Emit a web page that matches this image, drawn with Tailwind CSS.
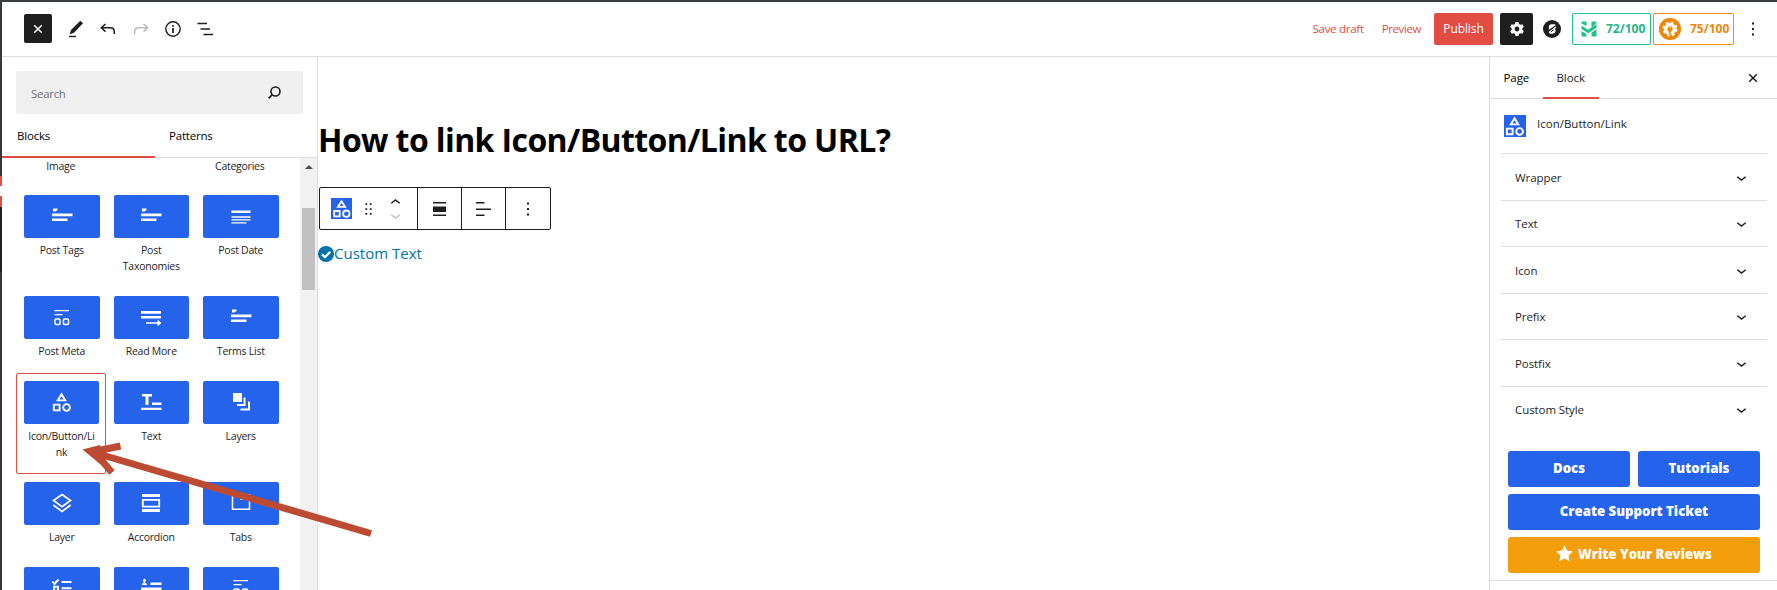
<!DOCTYPE html>
<html lang="en">
<head>
<meta charset="utf-8">
<title>Edit Page</title>
<script src="https://cdn.jsdelivr.net/npm/@tailwindcss/browser@4"></script>
</head>
<body class="h-[590px] w-[1777px] overflow-hidden bg-white font-['Open_Sans',sans-serif] text-[11.5px] text-[#1e1e1e]">
<svg class="hidden">
  <symbol id="shapes" viewBox="0 0 24 24"><g fill="none" stroke="currentColor" stroke-width="2"><path d="M12 3.500 15.900 9.800H8.100Z"/><path d="M4 14.200h6v6H4z"/><circle cx="17.300" cy="17.200" r="3.500"/></g></symbol>
  <symbol id="tags" viewBox="0 0 24 24"><path fill="currentColor" d="M3 3.500h4.500V5L5.500 6.500H3zM2 8.500h20.500v2.700H2zM2 13.500h15.500v2.500H2z"/></symbol>
  <symbol id="meta" viewBox="0 0 24 24"><path fill="currentColor" d="M4.500 4H19v1.300H4.500zM4.500 8h8v1.300h-8z"/><g fill="none" stroke="currentColor" stroke-width="1.500"><rect x="5" y="13" width="5" height="5.500" rx="1"/><rect x="13.500" y="13" width="5" height="5.500" rx="1"/></g></symbol>
  <symbol id="chev" viewBox="0 0 12 8"><path d="M1.200 2 6 5.800 10.800 2" fill="none" stroke="currentColor" stroke-width="1.700"/></symbol>
</svg>
<div class="relative flex h-full flex-col border-t-2 border-[#3a3e43]">
  <div class="flex min-h-0 flex-1">
    <div class="flex w-[2px] shrink-0 flex-col bg-[#33383d]"><div class="mt-[174px] h-[10px] bg-[#e34f47]"></div><div class="h-[10px] bg-white"></div><div class="h-[11px] bg-[#e34f47]"></div><div class="h-[65px] bg-[#1d2125]"></div></div>
    <div class="flex min-w-0 flex-1 flex-col">
      <header class="flex h-[55px] shrink-0 items-center border-b border-[#dedede] pr-[22px] pb-px pl-[22px]">
        <button class="flex h-[29px] w-7 items-center justify-center rounded-[2px] bg-[#1e1e1e] text-white"><svg class="size-[10px]" viewBox="0 0 10 10"><path d="M1.200 1.200l7.600 7.600M8.800 1.200 1.200 8.800" stroke="currentColor" stroke-width="1.500"/></svg></button>
        <svg class="ml-4 h-[18px] w-4" viewBox="0 0 16 18"><path d="M12.300.800 15 3.300 6 12.800 1.700 14.300 3 9.900Z" fill="#1e1e1e"/><path d="M1 16.500h7" stroke="#1e1e1e" stroke-width="1.400"/></svg>
        <svg class="ml-4 h-3 w-4" viewBox="0 0 16 12"><path d="M5.500 1 1.300 4.800 5.500 8.600M1.500 4.800H10q4.300 0 4.300 3.500V11" fill="none" stroke="#1e1e1e" stroke-width="1.500"/></svg>
        <svg class="ml-[17px] h-3 w-4" viewBox="0 0 16 12"><path d="M10.500 1 14.700 4.800 10.500 8.600M14.500 4.800H6Q1.700 4.800 1.700 8.300V11" fill="none" stroke="#bbb" stroke-width="1.500"/></svg>
        <svg class="ml-4 size-4" viewBox="0 0 16 16"><circle cx="8" cy="8" r="7.200" fill="none" stroke="#1e1e1e" stroke-width="1.400"/><path d="M8 7v5M8 4v1.700" stroke="#1e1e1e" stroke-width="1.700"/></svg>
        <svg class="ml-4 h-[14px] w-4" viewBox="0 0 16 14"><path d="M.500 1.500h9.500M3.500 7h9.500M6.500 12.500H16" stroke="#1e1e1e" stroke-width="1.500"/></svg>
        <div class="ml-auto flex items-center">
          <span class="tracking-[-0.28px] text-[#e14d43]">Save draft</span>
          <span class="ml-[18px] tracking-[-0.4px] text-[#e14d43]">Preview</span>
          <button class="ml-[13px] flex h-8 w-[59px] items-center justify-center rounded-[2px] bg-[#e14d43] text-[12px] tracking-[-0.1px] text-white">Publish</button>
          <button class="ml-[7px] flex h-8 w-[33px] items-center justify-center rounded-[2px] bg-[#1e1e1e]"><svg class="size-4" viewBox="0 0 16 16"><path d="M6.500 1h3l.5 2 1.300.8 2-.6 1.500 2.600L13.300 7.200v1.600l1.500 1.400-1.500 2.600-2-.6L10 13l-.5 2h-3L6 13l-1.300-.8-2 .6-1.500-2.600 1.500-1.400V7.200L1.200 5.800l1.500-2.600 2 .6L6 3Z" fill="#fff"/><circle cx="8" cy="8" r="2.400" fill="#1e1e1e"/></svg></button>
          <svg class="ml-[10px] size-[18px]" viewBox="0 0 18 18"><circle cx="9" cy="9" r="9" fill="#1e1e1e"/><path d="M5.800 9.800V7Q6 4.300 8.500 4.300h2.700q1.200 0 1.700.7Z" fill="#fff"/><path d="M5.800 11.700 12.800 6.300q.5 1.500-.9 2.700 1 .8.700 2.300-.5 2.400-3 2.400H7.500q-1.500-.2-1.700-2Z" fill="#fff"/><path d="M8 11.700 10.800 9.700" stroke="#1e1e1e" stroke-width="1"/></svg>
          <div class="ml-[11px] flex h-8 w-[79px] items-center rounded-[2px] border border-[#1fc48a] pl-2 text-[12px] font-bold text-[#1fb785]"><svg class="size-4" viewBox="0 0 16 16"><path d="M.500.500h5v4.500L.500 2.500ZM10.500.500h5v1.500l-5 4.500ZM.500 4.500 7 8.700 15.500 2.900v3.800L7.200 12.300.500 8ZM.500 10l5 3v2.500h-5ZM10.500 11.500l5-3.300v7.300h-5Z" fill="#1fc48a"/></svg><span class="ml-[9px]">72/100</span></div>
          <div class="ml-[2px] flex h-8 w-[81px] items-center rounded-[2px] border border-[#f48e0b] pl-[5px] text-[12px] font-bold text-[#f0860a]"><svg class="size-[22px]" viewBox="0 0 22 22"><circle cx="11" cy="11" r="11" fill="#f18500"/><circle cx="11" cy="11" r="6" fill="#fff"/><circle cx="11" cy="11" r="6.500" fill="none" stroke="#fff" stroke-width="2" stroke-dasharray="2.800 2.300"/><path d="M8.500 9.500v2q0 2 1.700 2.200V17h1.600v-3.300q1.700-.2 1.700-2.200v-2h-1V7.500h-.8v2h-1.400v-2h-.8v2Z" fill="#f18500"/></svg><span class="ml-[9px]">75/100</span></div>
          <svg class="ml-[17px] h-[14px] w-[4px]" viewBox="0 0 4 14"><path d="M1 .500h2v2H1zM1 6h2v2H1zM1 11.500h2v2H1z" fill="#1e1e1e"/></svg>
        </div>
      </header>
      <div class="flex min-h-0 flex-1">
        <aside class="flex w-[316px] shrink-0 flex-col border-r border-[#dedede]">
          <div class="mx-[14px] mt-[14px] flex h-[43px] w-[287px] shrink-0 items-center justify-between rounded-[2px] bg-[#f0f0f0] pt-[2px] pr-[22px] pl-[15px] tracking-[-0.3px] text-[#757575]"><span>Search</span><svg class="mb-[2px] size-[13px] text-[#1e1e1e]" viewBox="0 0 13 13"><circle cx="7.500" cy="5.500" r="4.500" fill="none" stroke="currentColor" stroke-width="1.600"/><path d="M4.300 8.700.700 12.300" stroke="currentColor" stroke-width="1.700"/></svg></div>
          <div class="flex h-[44px] shrink-0 border-b border-[#dedede] tracking-[-0.2px] text-black">
            <div class="flex h-[44px] w-[153px] items-center border-b-2 border-[#e14d43] pt-px pl-[15px]">Blocks</div>
            <div class="flex items-center pl-[14px]">Patterns</div>
          </div>
          <div class="flex min-h-0 flex-1">
            <div class="w-[298px] overflow-hidden">
              <div class="ml-[14px] grid w-[268.5px] grid-cols-3 text-center text-[10.5px] leading-4 tracking-[-0.25px]">
                <div class="h-[29px]">Image</div><div></div><div>Categories</div>
                <div class="h-[101px] pt-2 pr-[6px] pl-2"><div class="mb-1 flex h-[43px] items-center justify-center rounded-[2px] bg-[#2563eb] text-white"><svg class="size-6"><use href="#tags"/></svg></div>Post Tags</div>
                <div class="pt-2 pr-[6px] pl-2"><div class="mb-1 flex h-[43px] items-center justify-center rounded-[2px] bg-[#2563eb] text-white"><svg class="size-6"><use href="#tags"/></svg></div>Post<br>Taxonomies</div>
                <div class="pt-2 pr-[6px] pl-2"><div class="mb-1 flex h-[43px] items-center justify-center rounded-[2px] bg-[#2563eb] text-white"><svg class="size-5" viewBox="0 0 20 20"><path fill="currentColor" d="M.500 3.500h19V6H.500zM.500 9.300h19v1.400H.500zM.500 12.300h19v1.200H.500zM.500 15.200h15v1.200H.500z"/></svg></div>Post Date</div>
                <div class="h-[84.5px] pt-2 pr-[6px] pl-2"><div class="mb-1 flex h-[43px] items-center justify-center rounded-[2px] bg-[#2563eb] text-white"><svg class="size-6"><use href="#meta"/></svg></div>Post Meta</div>
                <div class="pt-2 pr-[6px] pl-2"><div class="mb-1 flex h-[43px] items-center justify-center rounded-[2px] bg-[#2563eb] text-white"><svg class="size-6" viewBox="0 0 24 24"><path fill="currentColor" d="M2 5h20v2.700H2zM2 10h20v2.500H2zM7 16.300h11.500v-2.500L22.500 17l-4 3.200v-2.400H7z"/></svg></div>Read More</div>
                <div class="pt-2 pr-[6px] pl-2"><div class="mb-1 flex h-[43px] items-center justify-center rounded-[2px] bg-[#2563eb] text-white"><svg class="size-6"><use href="#tags"/></svg></div>Terms List</div>
                <div class="h-[101px] w-[90px] rounded-[2px] border-[1.5px] border-[#e14d43] pt-[7px] pr-[6px] pl-[7px]"><div class="mb-1 flex h-[43px] items-center justify-center rounded-[2px] bg-[#2563eb] text-white"><svg class="size-[23px]"><use href="#shapes"/></svg></div>Icon/Button/Li<br>nk</div>
                <div class="pt-2 pr-[6px] pl-2"><div class="mb-1 flex h-[43px] items-center justify-center rounded-[2px] bg-[#2563eb] text-white"><svg class="size-6" viewBox="0 0 24 24"><path fill="currentColor" d="M3 4h10v2.500H9.500V15h-3V6.500H3zM13 12.500h9.500V15H13zM2 17.700h20.500V20H2z"/></svg></div>Text</div>
                <div class="pt-2 pr-[6px] pl-2"><div class="mb-1 flex h-[43px] items-center justify-center rounded-[2px] bg-[#2563eb] text-white"><svg class="size-6" viewBox="0 0 24 24"><path fill="currentColor" d="M4 3h9v9H4zM14.500 7.500h2V16H8v-2h6.500zM19 11.500h2V20.500h-9.500v-2H19z"/></svg></div>Layers</div>
                <div class="h-[85px] pt-2 pr-[6px] pl-2"><div class="mb-1 flex h-[43px] items-center justify-center rounded-[2px] bg-[#2563eb] text-white"><svg class="size-6" viewBox="0 0 24 24"><path fill="none" stroke="currentColor" stroke-width="1.700" d="M12 3.500 20.500 9.500 12 15.800 3.500 9.500ZM3.300 14 12 20.500 20.700 14"/></svg></div>Layer</div>
                <div class="pt-2 pr-[6px] pl-2"><div class="mb-1 flex h-[43px] items-center justify-center rounded-[2px] bg-[#2563eb] text-white"><svg class="size-6" viewBox="0 0 24 24"><path fill="currentColor" d="M3 3h18v3H3zM3 18h18v3H3z"/><path d="M3.800 8.800h16.400v6.900H3.800z" fill="none" stroke="currentColor" stroke-width="1.800"/></svg></div>Accordion</div>
                <div class="pt-2 pr-[6px] pl-2"><div class="mb-1 flex h-[43px] items-center justify-center rounded-[2px] bg-[#2563eb] text-white"><svg class="size-6" viewBox="0 0 24 24"><path fill="none" stroke="currentColor" stroke-width="1.500" d="M3.500 4h17v14.200h-17zM12 4v4h8.500"/></svg></div>Tabs</div>
                <div class="pt-2 pr-[6px] pl-2"><div class="flex h-[43px] items-center justify-center rounded-[2px] bg-[#2563eb] text-white"><svg class="size-6" viewBox="0 0 24 24"><path fill="none" stroke="currentColor" stroke-width="2" d="M2.500 5.500 4.500 8 8.500 3.500M11.500 6H21.500M11.500 12.300H21.500M4 10.700h4v4H4z"/></svg></div></div>
                <div class="pt-2 pr-[6px] pl-2"><div class="flex h-[43px] items-center justify-center rounded-[2px] bg-[#2563eb] text-white"><svg class="size-6" viewBox="0 0 24 24"><path fill="currentColor" d="M3 9q.2-2 2-2.400Q3.500 5 4.300 3.500q1.200-1.400 2.400 0Q7.500 5 6 6.600 7.800 7 8 9zM11.500 6.500h11V9h-11zM2 11.500h20.500V14H2z"/></svg></div></div>
                <div class="pt-2 pr-[6px] pl-2"><div class="flex h-[43px] items-center justify-center rounded-[2px] bg-[#2563eb] text-white"><svg class="size-6"><use href="#meta"/></svg></div></div>
              </div>
            </div>
            <div class="flex w-[17px] flex-col items-center bg-[#f1f1f1] pt-[7px]">
              <svg class="h-[4px] w-[8px]" viewBox="0 0 8 4"><path d="M4 0 8 4H0Z" fill="#505050"/></svg>
              <div class="mt-[39px] h-[82px] w-[13px] bg-[#c1c1c1]"></div>
            </div>
          </div>
        </aside>
        <main class="flex min-w-0 flex-1 flex-col items-start">
          <h1 class="mt-[61px] text-[32px] leading-[44px] font-bold tracking-[-0.6px] whitespace-nowrap text-black">How to link Icon/Button/Link to URL?</h1>
          <div class="mt-[25px] ml-px flex h-[43px] w-[232px] items-center rounded-[2px] border border-[#1e1e1e]">
            <div class="flex h-full w-[98px] items-center border-r border-[#1e1e1e] pl-[11px]">
              <div class="flex size-[21px] items-center justify-center bg-[#2563eb] text-white"><svg class="size-[21px]" viewBox="1 0 22 23"><use href="#shapes" width="24" height="24"/></svg></div>
              <svg class="ml-[13px] h-[14px] w-[7px]" viewBox="0 0 8 14"><path d="M.500.500h2v2h-2zM5.500.500h2v2h-2zM.500 6h2v2h-2zM5.500 6h2v2h-2zM.500 11.500h2v2h-2zM5.500 11.500h2v2h-2z" fill="#1e1e1e"/></svg>
              <div class="ml-[18px] flex flex-col gap-[8px]"><svg class="h-[7px] w-[11px] rotate-180"><use href="#chev"/></svg><svg class="h-[7px] w-[11px] text-[#bbb]"><use href="#chev"/></svg></div>
            </div>
            <div class="flex h-full w-[44px] items-center justify-center border-r border-[#1e1e1e]"><svg class="h-[14px] w-[13px]" viewBox="0 0 13 14"><path d="M0 0h13v1.500H0zM0 4.500h13v5.500H0zM0 12.500h13V14H0z" fill="#1e1e1e"/></svg></div>
            <div class="flex h-full w-[44px] items-center justify-center border-r border-[#1e1e1e]"><svg class="h-[14px] w-[15px]" viewBox="0 0 15 14"><path d="M0 0h8.500v1.400H0zM0 6.500h15v1.400H0zM0 12.500h8.500v1.400H0z" fill="#1e1e1e"/></svg></div>
            <div class="flex h-full flex-1 items-center justify-center"><svg class="h-[14px] w-[4px]" viewBox="0 0 4 14"><path d="M1 .500h2v2H1zM1 6h2v2H1zM1 11.500h2v2H1z" fill="#1e1e1e"/></svg></div>
          </div>
          <div class="mt-[13px] flex items-center text-[15px] leading-[21px] text-[#0073aa]"><svg class="mt-px size-4" viewBox="0 0 16 16"><circle cx="8" cy="8" r="8" fill="currentColor"/><path d="M4 8.300 6.900 11.200 12.300 5.700" fill="none" stroke="#fff" stroke-width="2.300"/></svg>Custom Text</div>
        </main>
        <aside class="flex w-[288px] shrink-0 flex-col border-l border-[#dedede] tracking-[-0.08px]">
          <div class="flex h-[42px] shrink-0 border-b border-[#dedede]">
            <div class="flex items-center pl-[13.5px] text-black">Page</div>
            <div class="ml-[13.5px] flex h-[42px] w-[56px] items-center justify-center border-b-2 border-[#e14d43] pt-px">Block</div>
            <svg class="mt-4 mr-[19px] ml-auto size-[10px]" viewBox="0 0 10 10"><path d="M1.200 1.200l7.600 7.600M8.800 1.200 1.200 8.800" stroke="#1e1e1e" stroke-width="1.500"/></svg>
          </div>
          <div class="flex h-[54px] shrink-0 pt-4 pl-[14px]">
            <div class="size-[22px] bg-[#2563eb] text-white"><svg class="size-[22px]" viewBox="1 0 23 23"><use href="#shapes" width="24" height="24"/></svg></div>
            <span class="ml-[11px] leading-[18px] tracking-normal">Icon/Button/Link</span>
          </div>
          <div class="mr-[10px] ml-[11px] flex flex-col *:flex *:h-[46.5px] *:items-center *:justify-between *:border-t *:border-[#dedede] *:pt-px *:pr-5 *:pl-[14px]">
            <div>Wrapper<svg class="mt-[2px] h-[7px] w-[11px]"><use href="#chev"/></svg></div>
            <div>Text<svg class="mt-[2px] h-[7px] w-[11px]"><use href="#chev"/></svg></div>
            <div>Icon<svg class="mt-[2px] h-[7px] w-[11px]"><use href="#chev"/></svg></div>
            <div>Prefix<svg class="mt-[2px] h-[7px] w-[11px]"><use href="#chev"/></svg></div>
            <div>Postfix<svg class="mt-[2px] h-[7px] w-[11px]"><use href="#chev"/></svg></div>
            <div>Custom Style<svg class="mt-[2px] h-[7px] w-[11px]"><use href="#chev"/></svg></div>
          </div>
          <div class="mt-[19px] grid grid-cols-2 gap-x-2 gap-y-[7px] border-b border-[#dedede] pr-[17px] pb-[7px] pl-[18px] text-[13.2px] font-extrabold tracking-normal text-white">
            <button class="h-9 rounded-[3px] bg-[#2563eb]">Docs</button>
            <button class="h-9 rounded-[3px] bg-[#2563eb]">Tutorials</button>
            <button class="col-span-2 h-9 rounded-[3px] bg-[#2563eb]">Create Support Ticket</button>
            <button class="col-span-2 flex h-9 items-center justify-center rounded-[3px] bg-[#f59e0b]"><svg class="mr-[5px] mb-1 size-[17px]" viewBox="0 0 17 17"><path d="M8.500.300 11 5.600l5.800.8-4.200 4 1 5.900-5.100-2.800-5.100 2.800 1-5.900-4.200-4L6 5.600Z" fill="#fff"/></svg>Write Your Reviews</button>
          </div>
        </aside>
      </div>
    </div>
  </div>
  <svg class="pointer-events-none absolute top-[438px] left-[76px] h-[105px] w-[304px]" viewBox="76 440 304 105"><g fill="none" stroke="#bd4a32" stroke-width="7"><path d="M371 533.500 97 453.500"/><path d="M120.500 446 94 451.500 112 472.500"/></g><path d="M82.500 449.500 100 445l4 12-4 7Z" fill="#bd4a32"/></svg>
</div>
</body>
</html>
